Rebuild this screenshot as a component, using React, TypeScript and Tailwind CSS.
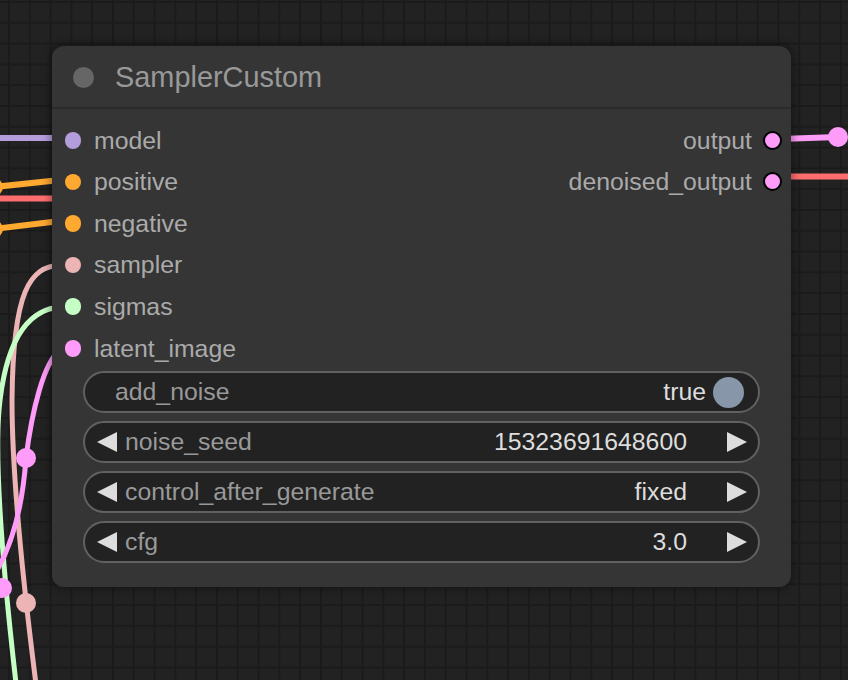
import * as React from "react";

const INPUTS = [
  { name: "model", color: "bg-[#b39ddb]" },
  { name: "positive", color: "bg-[#ffa931]" },
  { name: "negative", color: "bg-[#ffa931]" },
  { name: "sampler", color: "bg-[#ecb4b4]" },
  { name: "sigmas", color: "bg-[#c6ffc6]" },
  { name: "latent_image", color: "bg-[#ff9cf9]" },
];

const OUTPUTS = ["output", "denoised_output"];

const NUMBER_WIDGETS = [
  { name: "noise_seed", value: "15323691648600" },
  { name: "control_after_generate", value: "fixed" },
  { name: "cfg", value: "3.0" },
];

function Arrow({ dir }: { dir: "left" | "right" }) {
  return (
    <svg width="20" height="20" viewBox="0 0 20 20" className="shrink-0">
      <polygon points={dir === "left" ? "20,0 20,20 0,10" : "0,0 0,20 20,10"} fill="#dddddd" />
    </svg>
  );
}

function Links() {
  return (
    <svg width="848" height="680" className="absolute inset-0" fill="none">
      <path d="M0 138 L60 138" stroke="#b39ddb" strokeWidth="6" />
      <path d="M-6 187 L60 180" stroke="#ffa931" strokeWidth="6" />
      <circle cx="-6" cy="187" r="9" fill="#ffa931" />
      <path d="M0 198.5 L60 198.5" stroke="#ff6e6e" strokeWidth="6" />
      <path d="M-6 229 L60 221" stroke="#ffa931" strokeWidth="6" />
      <circle cx="-6" cy="229" r="9" fill="#ffa931" />

      <path d="M60 265 C30 267, 13 290, 12 400 C12 470, 20 560, 37 692" stroke="#ecb4b4" strokeWidth="5" />
      <path d="M60 307 C25 310, 5 345, -1 410 C-6 470, 4 580, 17 692" stroke="#c6ffc6" strokeWidth="5" />
      <path d="M60 350 C44 362, 32 410, 26 458 C23 500, 15 540, -4 572" stroke="#ff9cf9" strokeWidth="5" />
      <circle cx="26" cy="458" r="10" fill="#ff9cf9" />
      <circle cx="2" cy="588" r="10" fill="#ff9cf9" />
      <circle cx="26" cy="603" r="10" fill="#ecb4b4" />

      <path d="M780 139 L838 137" stroke="#ff9cf9" strokeWidth="6" />
      <circle cx="838" cy="137" r="10" fill="#ff9cf9" />
      <path d="M780 176.5 L850 176.5" stroke="#ff6e6e" strokeWidth="6" />
    </svg>
  );
}

export default function App() {
  return (
    <div className="relative h-[680px] w-[848px] overflow-hidden bg-[#222222] bg-[linear-gradient(to_right,#1b1b1b_2px,transparent_2px),linear-gradient(to_bottom,#1b1b1b_2px,transparent_2px)] [background-size:20.8px_20.8px] [background-position:8px_1px] font-['Liberation_Sans',Arial,sans-serif]">
      <Links />

      <div className="absolute left-[52px] top-[46px] flex h-[541px] w-[739px] flex-col rounded-[12px] bg-[#353535] shadow-[0_0_8px_2px_rgba(0,0,0,0.35)]">
        <div className="flex h-[63px] shrink-0 items-center border-b-2 border-[#2b2b2b] pl-[21px] pt-[3px]">
          <span className="-mt-[2px] size-[21px] rounded-full bg-[#666666]" />
          <span className="ml-[21px] text-[28.9px] text-[#999999]">SamplerCustom</span>
        </div>

        <div className="grid grid-cols-2 pt-[10.5px]">
          <div className="flex flex-col">
            {INPUTS.map((s) => (
              <div key={s.name} className="flex h-[41.6px] items-center pl-[12.5px]">
                <span className={`size-[16.5px] rounded-full ${s.color}`} />
                <span className="ml-[13px] text-[24.8px] text-[#aaaaaa]">{s.name}</span>
              </div>
            ))}
          </div>
          <div className="flex flex-col">
            {OUTPUTS.map((o) => (
              <div key={o} className="flex h-[41.6px] items-center justify-end pr-[9px]">
                <span className="mr-[11px] text-[24.8px] text-[#aaaaaa]">{o}</span>
                <span className="size-[19px] rounded-full border-2 border-black bg-[#ff9cf9]" />
              </div>
            ))}
          </div>
        </div>

        <div className="mt-[2px] flex flex-col gap-[8px] px-[31px]">
          <div className="flex h-[42px] items-center rounded-full border-2 border-[#616161] bg-[#222222] pl-[30px] pr-[14px]">
            <span className="text-[24.8px] text-[#999999]">add_noise</span>
            <span className="ml-auto text-[24.8px] text-[#dddddd]">true</span>
            <span className="ml-[7px] size-[31px] rounded-full bg-[#8796a8]" />
          </div>
          {NUMBER_WIDGETS.map((w) => (
            <div
              key={w.name}
              className="flex h-[42px] items-center rounded-full border-2 border-[#616161] bg-[#222222] pl-[12px] pr-[11px]"
            >
              <Arrow dir="left" />
              <span className="ml-[8px] text-[24.8px] text-[#999999]">{w.name}</span>
              <span className="ml-auto text-[24.8px] text-[#dddddd]">{w.value}</span>
              <span className="ml-[40px]">
                <Arrow dir="right" />
              </span>
            </div>
          ))}
        </div>
      </div>
    </div>
  );
}
